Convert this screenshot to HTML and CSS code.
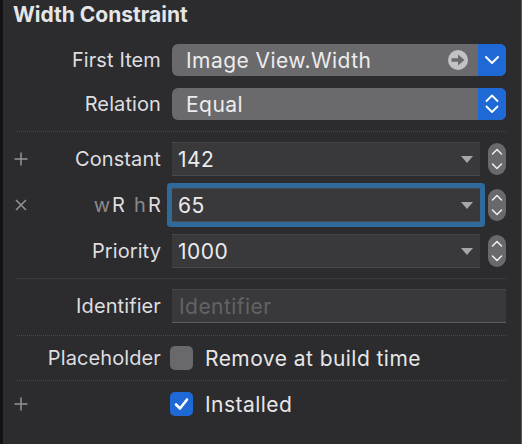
FILE: index.html
```html
<!DOCTYPE html>
<html>
<head>
<meta charset="utf-8">
<link rel="stylesheet" href="styles.css">
</head>
<body>
<div class="panel">
  <div class="title">Width Constraint</div>

  <div class="row r-first">
    <div class="mark"></div>
    <div class="label">First Item</div>
    <div class="popup">
      <span class="ptext">Image View.Width</span>
      <svg class="goicon" width="20" height="20" viewBox="0 0 20 20"><circle cx="10" cy="10" r="10" fill="#c2c2c4"/><path d="M3.5 10 H11" stroke="#6a6a6c" stroke-width="3.6"/><polygon points="10,4.5 16.5,10 10,15.5" fill="#6a6a6c"/></svg>
      <span class="pbtn"><svg width="28" height="32" viewBox="0 0 28 32"><path d="M8 13 L14 19 L20 13" fill="none" stroke="#fff" stroke-width="2" stroke-linecap="round" stroke-linejoin="round"/></svg></span>
    </div>
  </div>

  <div class="row r-rel">
    <div class="mark"></div>
    <div class="label">Relation</div>
    <div class="popup">
      <span class="ptext">Equal</span>
      <span class="pbtn"><svg width="28" height="32" viewBox="0 0 28 32"><path d="M8.5 13 L14 7.5 L19.5 13 M8.5 18.5 L14 24 L19.5 18.5" fill="none" stroke="#fff" stroke-width="1.8" stroke-linecap="round" stroke-linejoin="round"/></svg></span>
    </div>
  </div>

  <div class="sep s1"></div>

  <div class="row r-const">
    <div class="mark"><svg width="14" height="14" viewBox="0 0 14 14"><path d="M7 0.5 V13.5 M0.5 7 H13.5" stroke="#949496" stroke-width="1.5"/></svg></div>
    <div class="label">Constant</div>
    <div class="fieldwrap">
      <div class="field"><span class="ftext">142</span><svg class="tri" width="12" height="7" viewBox="0 0 12 7"><polygon points="0,0 12,0 6,7" fill="#a6a6a8"/></svg></div>
      <svg class="stepper" width="18" height="32" viewBox="0 0 18 32"><rect width="18" height="32" rx="9" fill="#69696b"/><path d="M4.5 11 L9 6.5 L13.5 11 M4.5 21 L9 25.5 L13.5 21" fill="none" stroke="#ececec" stroke-width="1.6" stroke-linecap="round" stroke-linejoin="round"/></svg>
    </div>
  </div>

  <div class="row r-wr">
    <div class="mark"><svg width="12" height="12" viewBox="0 0 12 12"><path d="M1 1 L11 11 M11 1 L1 11" stroke="#949496" stroke-width="1.5"/></svg></div>
    <div class="label"><span class="dim">w</span>R<span class="gap"></span><span class="dim">h</span>R</div>
    <div class="fieldwrap">
      <div class="field focus"><span class="ftext">65</span><svg class="tri" width="12" height="7" viewBox="0 0 12 7"><polygon points="0,0 12,0 6,7" fill="#a6a6a8"/></svg></div>
      <svg class="stepper" width="18" height="32" viewBox="0 0 18 32"><rect width="18" height="32" rx="9" fill="#69696b"/><path d="M4.5 11 L9 6.5 L13.5 11 M4.5 21 L9 25.5 L13.5 21" fill="none" stroke="#ececec" stroke-width="1.6" stroke-linecap="round" stroke-linejoin="round"/></svg>
    </div>
  </div>

  <div class="row r-prio">
    <div class="mark"></div>
    <div class="label">Priority</div>
    <div class="fieldwrap">
      <div class="field"><span class="ftext">1000</span><svg class="tri" width="12" height="7" viewBox="0 0 12 7"><polygon points="0,0 12,0 6,7" fill="#a6a6a8"/></svg></div>
      <svg class="stepper" width="18" height="32" viewBox="0 0 18 32"><rect width="18" height="32" rx="9" fill="#69696b"/><path d="M4.5 11 L9 6.5 L13.5 11 M4.5 21 L9 25.5 L13.5 21" fill="none" stroke="#ececec" stroke-width="1.6" stroke-linecap="round" stroke-linejoin="round"/></svg>
    </div>
  </div>

  <div class="sep s2"></div>

  <div class="row r-ident">
    <div class="mark"></div>
    <div class="label">Identifier</div>
    <div class="field wide"><span class="ftext placeholder">Identifier</span></div>
  </div>

  <div class="sep s3"></div>

  <div class="row r-ph">
    <div class="mark"></div>
    <div class="label">Placeholder</div>
    <div class="check"><span class="box gray"></span><span class="ctext">Remove at build time</span></div>
  </div>

  <div class="sep s4"></div>

  <div class="row r-inst">
    <div class="mark"><svg width="14" height="14" viewBox="0 0 14 14"><path d="M7 0.5 V13.5 M0.5 7 H13.5" stroke="#949496" stroke-width="1.5"/></svg></div>
    <div class="label"></div>
    <div class="check"><span class="box blue"><svg width="23" height="24" viewBox="0 0 23 24"><path d="M6 12.5 L10 16.5 L17 7.5" fill="none" stroke="#fff" stroke-width="2.6" stroke-linecap="round" stroke-linejoin="round"/></svg></span><span class="ctext">Installed</span></div>
  </div>
</div>
</body>
</html>
```

FILE: styles.css
```css
* { box-sizing: border-box; }

html, body {
  margin: 0;
  padding: 0;
  background: #2c2c2e;
}

body {
  font-family: Inter, "Noto Sans", "Liberation Sans", sans-serif;
  font-size: 21px;
  letter-spacing: 0.45px;
  color: #e4e4e6;
}

.panel {
  width: 522px;
  height: 444px;
  border-left: 3px solid #121214;
  border-right: 1px solid #58585a;
  padding: 3px 15px 0 8px;
  display: flex;
  flex-direction: column;
  background: #2c2c2e;
}

.title {
  font-weight: 700;
  font-size: 21px;
  letter-spacing: 0;
  line-height: 24px;
  height: 24px;
  padding-left: 2px;
  color: #e6e6e8;
}

.row {
  display: grid;
  grid-template-columns: 20px 141px 334px;
  align-items: center;
}

.mark {
  display: flex;
  align-items: center;
  justify-content: center;
}

.label {
  text-align: right;
  padding-right: 11px;
  white-space: nowrap;
  font-size: 20px;
  letter-spacing: 0.1px;
  color: #dedee0;
}

.dim {
  color: #8a8a8c;
  margin-right: 2px;
}

.gap {
  display: inline-block;
  width: 9px;
}

.r-first { margin-top: 17px; }
.r-rel { margin-top: 12px; }
.r-const { margin-top: 10px; }
.r-wr { margin-top: 12px; }
.r-prio { margin-top: 12px; }
.r-ident { margin-top: 10px; }
.r-ph { margin-top: 10px; }
.r-inst { margin-top: 11px; }

.sep {
  margin-left: 6px;
  height: 1px;
  border-top: 1px dotted #4c4c4e;
}
.s1 { margin-top: 11px; }
.s2 { margin-top: 10px; }
.s3 { margin-top: 12px; }
.s4 { margin-top: 10px; }

.popup {
  height: 32px;
  display: flex;
  align-items: center;
  background: #6a6a6c;
  border-radius: 6px;
  overflow: hidden;
}

.ptext {
  flex: 1;
  padding-left: 14px;
  color: #ececee;
  white-space: nowrap;
}

.goicon {
  margin-right: 10px;
}

.pbtn {
  width: 28px;
  height: 32px;
  background: #1f69d7;
  display: flex;
}

.fieldwrap {
  display: flex;
  align-items: center;
  gap: 8px;
}

.field {
  width: 308px;
  height: 34px;
  background: #39393b;
  border-top: 1px dotted #4e4e50;
  border-bottom: 1px solid #4a4a4c;
  display: flex;
  align-items: center;
  padding: 0 7px 0 6px;
}

.field.wide {
  width: 334px;
  border-bottom: 1px solid #5e5e60;
  padding-left: 7px;
}

.field.focus {
  border-radius: 1px;
  box-shadow: 0 0 0 5px #2e6b9b;
}

.ftext {
  flex: 1;
  color: #ececee;
}

.ftext.placeholder {
  color: #636365;
}

.tri {
  display: block;
}

.stepper {
  display: block;
}

.check {
  display: flex;
  align-items: center;
  margin-left: -2px;
  height: 24px;
}

.box {
  width: 23px;
  height: 24px;
  border-radius: 5px;
  display: flex;
  margin-right: 12px;
}

.box.gray { background: #69696b; }
.box.blue { background: #1f69d7; }

.ctext {
  color: #e6e6e8;
  white-space: nowrap;
}
```
